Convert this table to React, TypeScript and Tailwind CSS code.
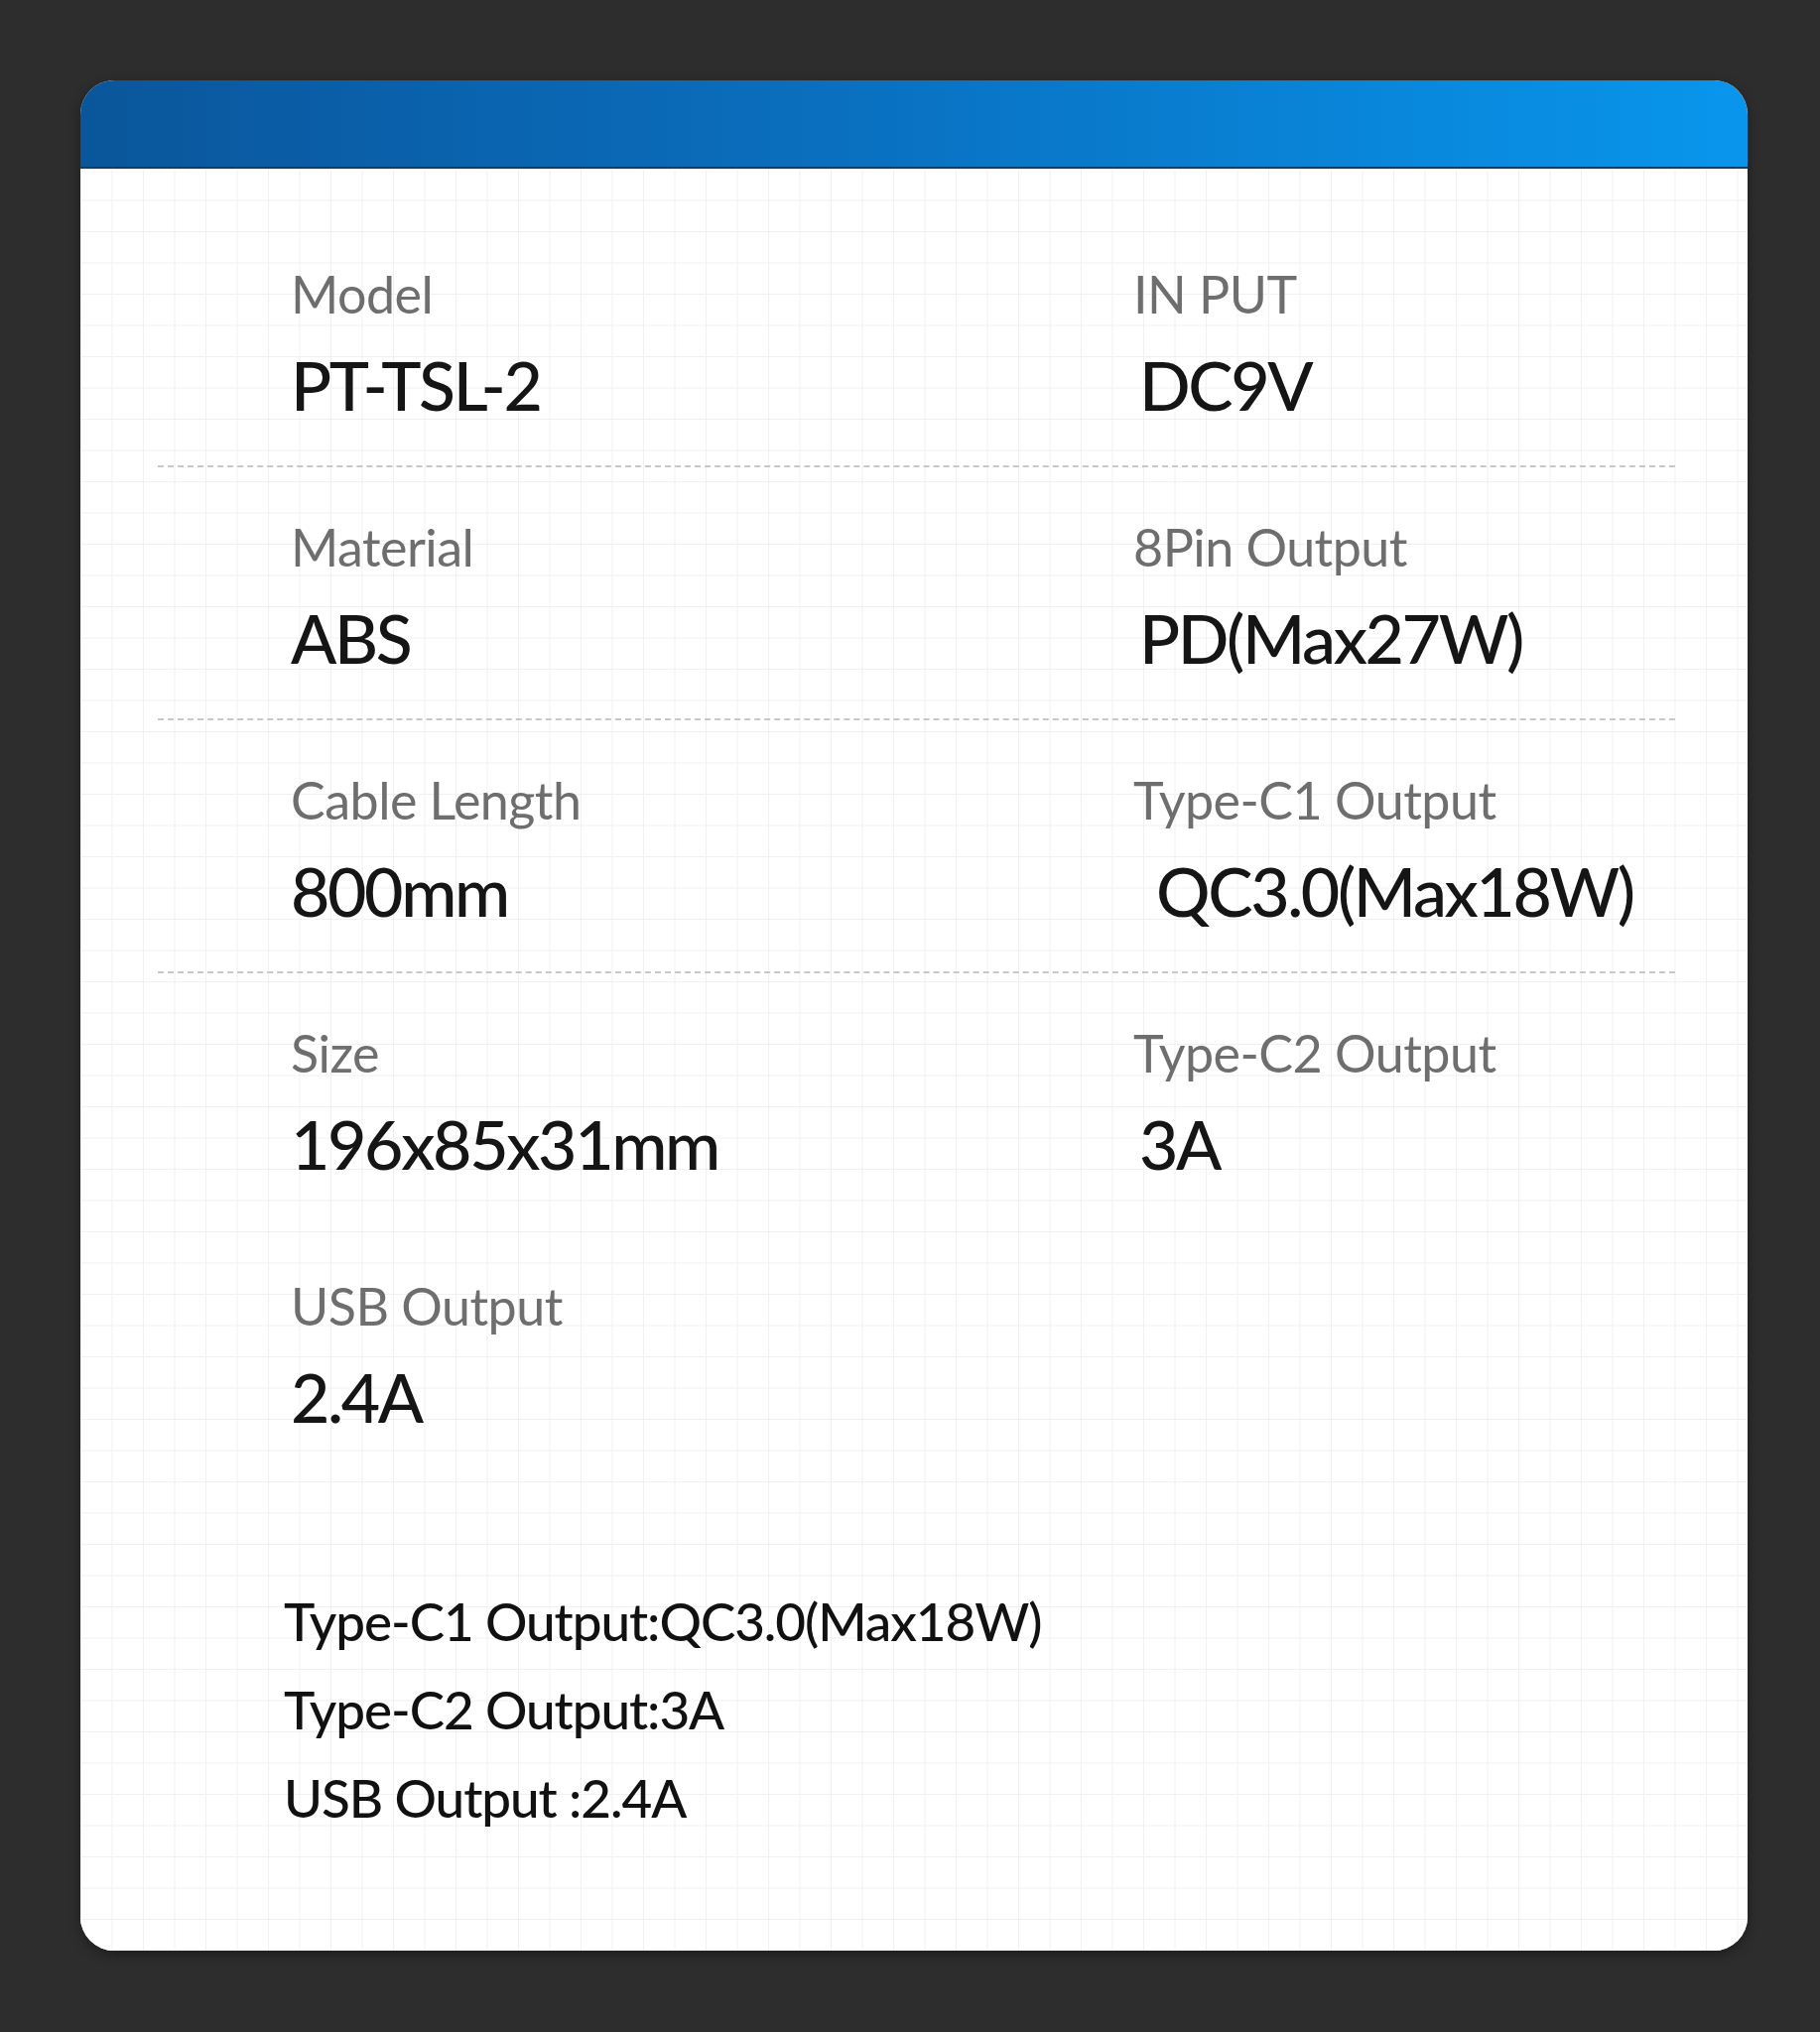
import React from "react";

type Spec = { label: string; value: string; indent?: boolean };

const rows: { left: Spec; right?: Spec; line: boolean }[] = [
  { left: { label: "Model", value: "PT-TSL-2" }, right: { label: "IN PUT", value: "DC9V" }, line: true },
  { left: { label: "Material", value: "ABS" }, right: { label: "8Pin Output", value: "PD(Max27W)" }, line: true },
  { left: { label: "Cable Length", value: "800mm" }, right: { label: "Type-C1 Output", value: "QC3.0(Max18W)", indent: true }, line: true },
  { left: { label: "Size", value: "196x85x31mm" }, right: { label: "Type-C2 Output", value: "3A" }, line: false },
  { left: { label: "USB Output", value: "2.4A" }, line: false },
];

function Cell({ spec, right }: { spec?: Spec; right?: boolean }) {
  if (!spec) return <div />;
  return (
    <div className={right ? "pl-[1061px]" : "pl-[212px]"}>
      <div className="h-[60px] leading-[60px] text-[52px] text-[#6e6e6e] tracking-[-0.01em] whitespace-nowrap">{spec.label}</div>
      <div
        className={
          "mt-[22px] h-[80px] leading-[80px] text-[68px] font-medium text-[#151515] tracking-[-0.035em] whitespace-nowrap " +
          (right ? (spec.indent ? "pl-[23px]" : "pl-[6px]") : "")
        }
      >
        {spec.value}
      </div>
    </div>
  );
}

export default function App() {
  return (
    <div className="min-h-[2048px] w-[1834px] bg-[#2d2d2d] pt-[81px] pl-[81px]" style={{ fontFamily: "Lato, 'Noto Sans', sans-serif" }}>
      <div className="w-[1680px] h-[1885px] rounded-[34px] overflow-hidden bg-white shadow-[0_4px_12px_rgba(0,0,0,0.35)] flex flex-col">
        <div className="h-[89px] shrink-0 bg-[linear-gradient(90deg,#0a569b_0%,#0a6fbf_45%,#0896ec_100%)] border-b-2 border-[#0a3f70]" />
        <div className="flex-1 bg-white bg-[linear-gradient(to_right,#f1f1f1_1px,transparent_1px),linear-gradient(to_bottom,#f1f1f1_1px,transparent_1px)] bg-[size:31.5px_31.5px] pt-[96px]">
          {rows.map((r, i) => (
            <div key={i} className="h-[255px] relative">
              <div className="grid grid-cols-[849px_1fr]">
                <Cell spec={r.left} />
                <div className="-ml-[849px]">
                  <Cell spec={r.right} right />
                </div>
              </div>
              {r.line && (
                <div className="mt-[41px] ml-[78px] mr-[73px] border-t-2 border-dashed border-[#c8c8c8]" />
              )}
            </div>
          ))}
          <div className="mt-[48px] pl-[205px] text-[53px] leading-[89px] font-medium text-[#111] tracking-[-0.02em]">
            <div>Type-C1 Output:QC3.0(Max18W)</div>
            <div>Type-C2 Output:3A</div>
            <div>USB Output :2.4A</div>
          </div>
        </div>
      </div>
    </div>
  );
}
